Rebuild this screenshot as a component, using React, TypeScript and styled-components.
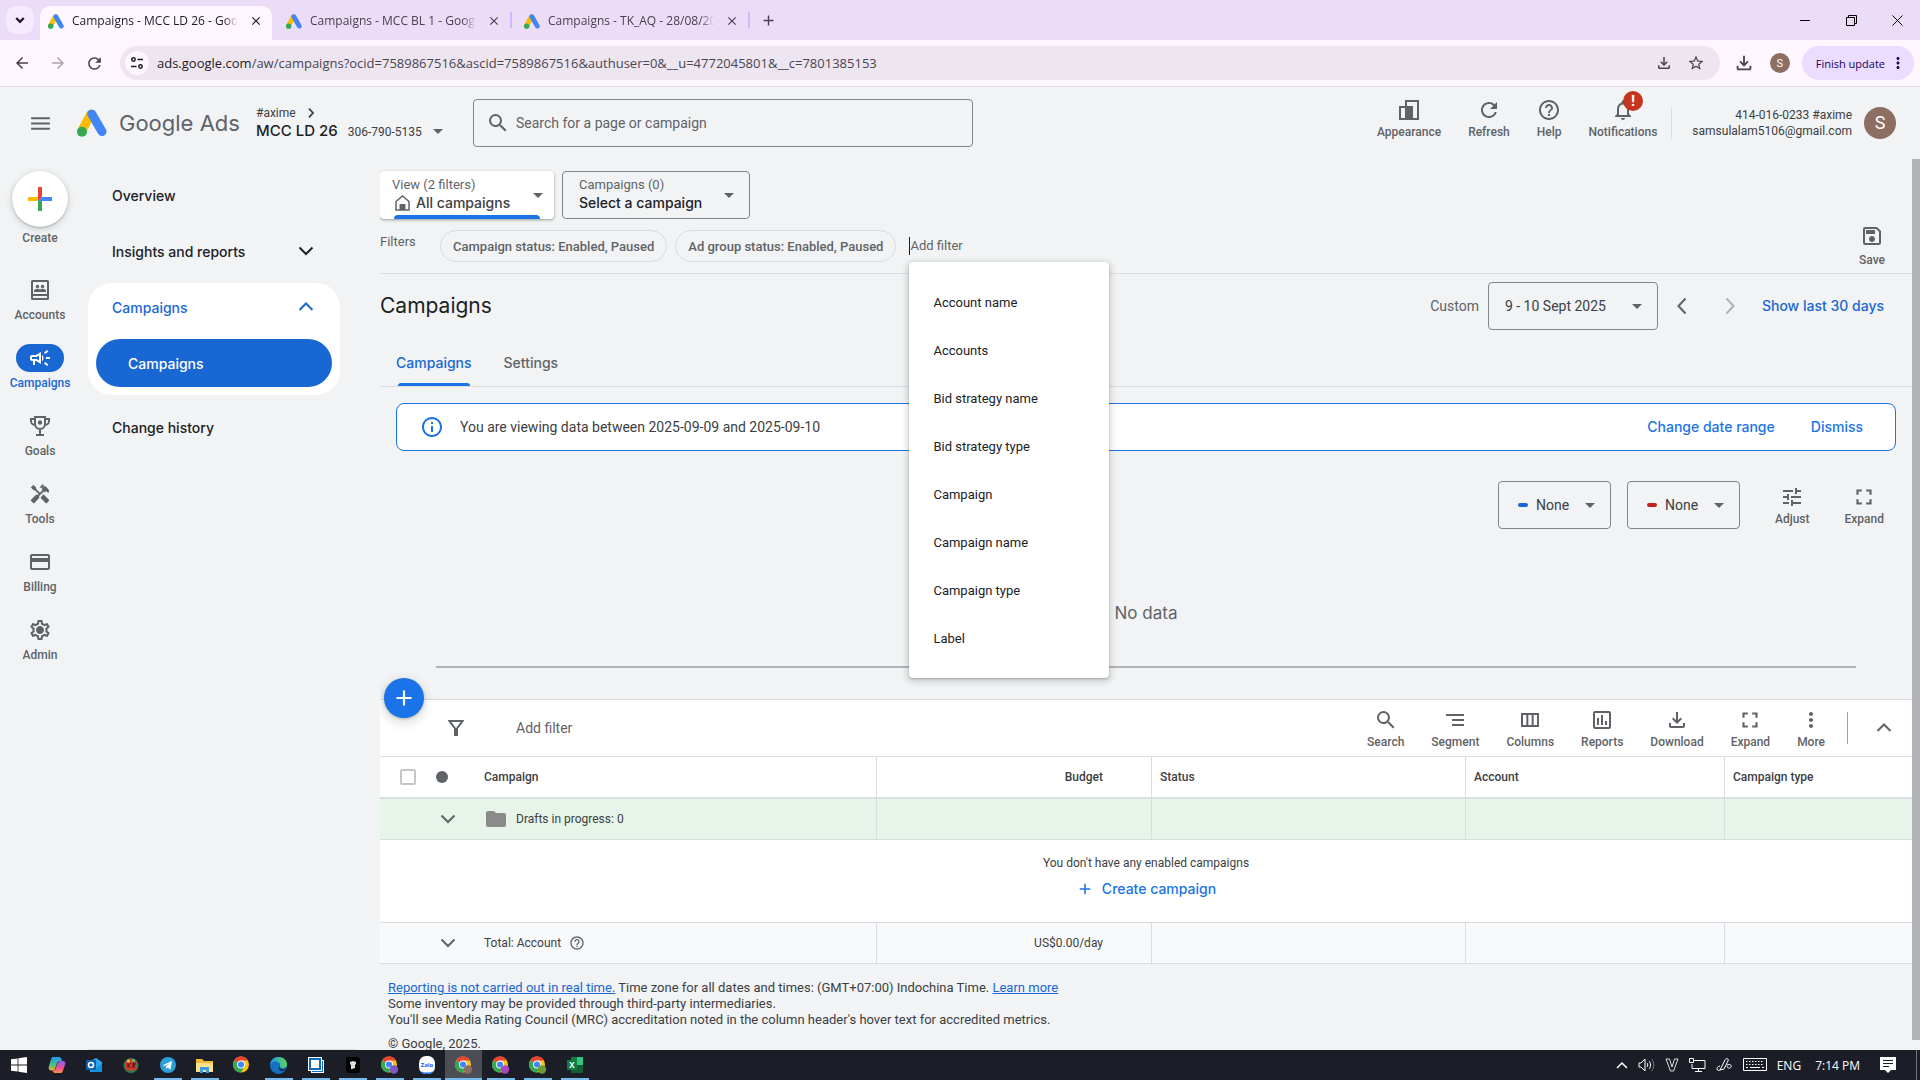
import React from "react";
import styled, { createGlobalStyle, css } from "styled-components";
import {
  MdMenu, MdSearch, MdRefresh, MdHelpOutline, MdNotificationsNone, MdArrowDropDown,
  MdOutlineCampaign, MdHandyman, MdOutlineCreditCard, MdOutlineSettings,
  MdOutlineSave, MdTune, MdFullscreen, MdInfoOutline, MdSegment, MdOutlineViewColumn,
  MdOutlineAssessment, MdOutlineFileDownload, MdMoreVert, MdFolder, MdAdd, MdArrowBack,
  MdArrowForward, MdStarBorder, MdClose,
} from "react-icons/md";

const ui = `Roboto, "Liberation Sans", sans-serif`;
const brand = `Inter, Roboto, sans-serif`;
const system = `"Open Sans", "Noto Sans", sans-serif`;

const Global = createGlobalStyle`
  *, *::before, *::after { box-sizing: border-box; }
  body { margin: 0; font-family: ${ui}; font-size: 12px; color: #3c4043; background: #f1f3f4; }
  button, input, select { font: inherit; color: inherit; background: none; border: 0; padding: 0; margin: 0; }
  button { cursor: pointer; }
  svg { display: block; flex: none; }
`;

/* ---------- shell ---------- */
const Screen = styled.div`
  display: flex; flex-direction: column; height: 100vh; overflow: hidden;
`;

/* ---------- browser ---------- */
const TabStrip = styled.div`
  display: flex; align-items: flex-end; height: 40px; flex: none; padding-left: 6px;
  background: #ebdcf7; font-family: ${system}; font-size: 12px; color: #4a4051;
`;
const TabSearch = styled.button`
  display: grid; place-items: center; width: 28px; height: 28px; margin: 0 6px 6px 0;
  border-radius: 10px; background: #f6ebfe; color: #1f1a24;
`;
const BrowserTab = styled.div<{ $active?: boolean }>`
  display: flex; align-items: center; gap: 8px; width: 232px; height: 34px; margin-right: 6px;
  padding: 0 6px 4px 8px; border-radius: 10px 10px 0 0;
  ${(p) => p.$active && css`background: #fef7ff; color: #1f1a24;`}
`;
const TabTitle = styled.span`
  flex: 1; overflow: hidden; white-space: nowrap; line-height: 20px;
  mask-image: linear-gradient(90deg, #000 92%, transparent);
`;
const TabClose = styled.button`display: grid; place-items: center; width: 20px; height: 20px;`;
const TabRule = styled.span<{ $hide?: boolean }>`
  width: 2px; height: 16px; margin: 0 0 12px -6px; background: #d5b8f8;
  visibility: ${(p) => (p.$hide ? "hidden" : "visible")};
`;
const TabSlot = styled.div`display: flex; align-items: flex-end; width: 238px; flex: none;`;
const NewTab = styled.button`display: grid; place-items: center; width: 28px; height: 28px; margin: 0 0 6px 0;`;
const WindowButtons = styled.div`display: flex; height: 40px; margin-left: auto; color: #000;`;
const WindowButton = styled.button`display: grid; place-items: center; width: 46px; height: 40px;`;

const Toolbar = styled.div`
  display: flex; align-items: center; height: 47px; flex: none; padding: 0 6px 0 4px;
  background: #fef7ff; border-bottom: 1px solid #e1dae9; font-family: ${system}; color: #4a4051;
`;
const NavButton = styled.button<{ $dim?: boolean }>`
  display: grid; place-items: center; width: 36px; height: 34px; opacity: ${(p) => (p.$dim ? 0.45 : 1)};
`;
const AddressBar = styled.div`
  display: flex; align-items: center; flex: 1; height: 34px; margin: 0 8px; padding: 0 8px 0 5px;
  border-radius: 17px; background: #ede5f0;
`;
const SiteInfo = styled.button`
  display: grid; place-items: center; width: 24px; height: 24px; margin-right: 8px; border-radius: 50%;
  background: #fef7ff; color: #1f1a24;
`;
const Address = styled.div`flex: 1; font-size: 13px; line-height: 20px; white-space: nowrap; color: #4a4550;
  b { font-weight: 400; color: #1f1a24; }
`;
const BarIcon = styled.button`display: grid; place-items: center; width: 32px; height: 32px;`;
const ToolbarEnd = styled.div`display: flex; align-items: center; gap: 4px;`;
const Avatar = styled.span<{ $size: number }>`
  display: grid; place-items: center; width: ${(p) => p.$size}px; height: ${(p) => p.$size}px; flex: none;
  border-radius: 50%; background: #8d6e63; color: #fff; font-family: ${ui};
  font-size: ${(p) => (p.$size > 24 ? 18 : 11)}px;
`;
const UpdateButton = styled.button`
  display: flex; align-items: center; gap: 4px; height: 34px; margin-left: 2px; padding: 0 7px 0 14px;
  border-radius: 17px; background: #eaddff; color: #22005d; font-size: 11px; white-space: nowrap;
`;

/* ---------- app header ---------- */
const Header = styled.header`
  display: flex; align-items: center; height: 72px; flex: none; padding: 0 24px 0 28px; background: #f1f3f4;
`;
const MenuButton = styled.button`display: grid; place-items: center; width: 24px; height: 24px; color: #5f6368;`;
const Logo = styled.a`
  display: flex; align-items: center; gap: 12px; width: 179px; margin-left: 25px; text-decoration: none;
  font-family: ${brand}; font-size: 22px; line-height: 28px; color: #5f6368; white-space: nowrap;
`;
const AccountPicker = styled.button`
  display: flex; flex-direction: column; width: 217px; text-align: left; color: #3c4043;
`;
const AccountParent = styled.span`display: flex; align-items: center; gap: 8px; height: 16px;`;
const AccountName = styled.span`display: flex; align-items: baseline; gap: 10px; height: 20px; line-height: 20px; white-space: nowrap;
  svg { align-self: center; margin-left: -6px; }
`;
const AccountStrong = styled.span`font-family: ${brand}; font-weight: 500; font-size: 15px; color: #202124;`;
const SearchBox = styled.label`
  display: flex; align-items: center; gap: 6px; width: 500px; height: 48px; padding: 0 12px;
  border: 1px solid #80868b; border-radius: 4px; color: #5f6368;
`;
const TextInput = styled.input`
  flex: 1; min-width: 0; outline: none; font-size: 14px; line-height: 20px;
  &::placeholder { color: #5f6368; opacity: 1; }
`;
const HeaderActions = styled.div`display: flex; align-items: center; gap: 24px; margin-left: auto;`;
const ActionGroup = styled.div`display: flex; gap: 27px; padding-bottom: 10px;`;
const IconAction = styled.button`
  display: flex; flex-direction: column; align-items: center; min-width: 24px; position: relative;
  font-weight: 500; font-size: 12px; line-height: 16px; color: #5f6368;
`;
const ActionIcon = styled.span<{ $h?: number }>`display: grid; place-items: center; height: ${(p) => p.$h ?? 28}px;`;
const AlertBadge = styled.span`
  position: absolute; top: -5px; left: 50%; display: grid; place-items: center; width: 20px; height: 20px;
  border-radius: 50%; background: #c5341f; color: #fff; font-weight: 700; font-size: 15px;
`;
const Identity = styled.div`
  display: flex; align-items: center; gap: 12px; margin-left: -10px; padding-left: 20px;
  border-left: 1px solid #dadce0; height: 32px; text-align: right; line-height: 16px;
`;

/* ---------- body ---------- */
const Body = styled.div`display: flex; flex: 1; min-height: 0; background: #f1f3f4;`;
const Rail = styled.nav`
  display: flex; flex-direction: column; align-items: center; gap: 21px; width: 80px; flex: none; padding-top: 12px;
`;
const RailItem = styled.a<{ $active?: boolean }>`
  display: flex; flex-direction: column; align-items: center; gap: 3px; text-decoration: none;
  font-weight: 500; font-size: 12px; line-height: 16px; color: ${(p) => (p.$active ? "#1967d2" : "#5f6368")};
`;
const CreateItem = styled.button`
  display: flex; flex-direction: column; align-items: center; gap: 3px; margin-bottom: 9px;
  font-weight: 500; line-height: 16px; color: #5f6368;
`;
const CreateCircle = styled.span`
  display: grid; place-items: center; width: 56px; height: 56px; border-radius: 50%; background: #fff;
  box-shadow: 0 1px 2px rgba(60,64,67,.3), 0 2px 6px 1px rgba(60,64,67,.15);
`;
const RailPill = styled.span<{ $active?: boolean }>`
  display: grid; place-items: center; width: 48px; height: 28px; border-radius: 14px;
  ${(p) => p.$active && css`background: #1967d2; color: #fff;`}
`;
const SubNav = styled.nav`
  width: 268px; flex: none; margin-left: 8px; padding: 8px 16px 0 0; border-bottom: 1px solid #dadce0;
  font-family: ${brand}; font-weight: 500; font-size: 14px; color: #202124;
`;
const navRow = css`
  display: flex; align-items: center; justify-content: space-between; width: 100%; padding: 0 22px 0 24px;
  color: inherit; text-decoration: none; font-weight: 500; text-align: left;
`;
const SubNavLink = styled.a`${navRow} height: 56px;`;
const SubNavToggle = styled.button<{ $h: number }>`${navRow} height: ${(p) => p.$h}px;`;
const SubNavCard = styled.div`margin: 4px 0; padding-bottom: 8px; border-radius: 24px; background: #fff; color: #1967d2;`;
const SubNavCurrent = styled.a`
  display: flex; align-items: center; height: 48px; margin: 8px 8px 0; padding-left: 32px;
  border-radius: 24px; background: #1967d2; color: #fff; text-decoration: none;
`;
const Main = styled.main`flex: 1; min-width: 0; margin-left: 24px; overflow: hidden;`;
const ScrollTrack = styled.div`width: 8px; flex: none; margin-bottom: 10px; background: #b1b2b5;`;

/* ---------- scope bar ---------- */
const ScopeBar = styled.section`
  display: flex; justify-content: space-between; align-items: flex-end; padding: 12px 27px 0 0;
  border-bottom: 1px solid #dadce0;
`;
const ScopeSelectors = styled.div`display: flex; gap: 8px;`;
const Caret = styled(MdArrowDropDown).attrs({ size: 24 })`color: #5f6368; pointer-events: none;`;
const ViewCard = styled.button`
  display: flex; justify-content: space-between; position: relative; width: 174px; height: 48px; padding: 6px 4px 0 12px;
  border-radius: 4px; background: #fff; text-align: left; color: #5f6368; font-size: 13px; line-height: 16px;
  box-shadow: 0 1px 2px rgba(60,64,67,.3), 0 1px 3px 1px rgba(60,64,67,.15);
  &::after { content: ""; position: absolute; left: 14px; right: 14px; bottom: 0; height: 4px; border-radius: 4px 4px 0 0; background: #1a73e8; }
  ${Caret} { margin-top: 6px; }
`;
const ViewName = styled.span`
  display: flex; align-items: center; gap: 6px; padding-left: 3px; height: 20px;
  font-family: ${brand}; font-weight: 500; font-size: 14px; color: #3c4043; white-space: nowrap;
`;
const SelectBox = styled.label<{ $w: number }>`
  display: flex; align-items: center; width: ${(p) => p.$w}px; height: 48px; padding: 0 8px 0 16px;
  border: 1px solid #80868b; border-radius: 4px; color: #5f6368; font-size: 13px; line-height: 16px;
`;
const SelectStack = styled.span`display: flex; flex-direction: column; flex: 1; min-width: 0;`;
const PlainSelect = styled.select<{ $brand?: boolean }>`
  appearance: none; outline: none; flex: 1; min-width: 0; height: 20px; font-size: 14px; line-height: 20px; color: #3c4043;
  ${(p) => p.$brand && css`font-family: ${brand}; font-weight: 500; color: #202124;`}
`;
const Filters = styled.div`display: flex; align-items: center; padding: 11px 0; color: #5f6368; font-size: 13px;`;
const FiltersLabel = styled.span`width: 60px; height: 24px; line-height: 16px;`;
const Chip = styled.button`
  height: 32px; margin-right: 8px; padding: 0 12px; border: 1px solid #dadce0; border-radius: 16px;
  font-weight: 500; white-space: nowrap;
`;
const AddFilter = styled.div`position: relative; display: flex; width: 200px; margin-left: 5px;
  input { font-size: 13px; border-left: 1px solid #202124; line-height: 18px; }
`;
const FilterMenu = styled.ul`
  position: absolute; z-index: 5; top: 25px; left: 0; width: 200px; margin: 0; padding: 16px 0; list-style: none;
  border-radius: 4px; background: #fff;
  box-shadow: 0 1px 2px rgba(60,64,67,.3), 0 2px 6px 2px rgba(60,64,67,.2);
`;
const FilterOption = styled.button`
  width: 100%; height: 48px; padding: 0 24px; text-align: left; font-size: 13px; color: #202124; display: block;
`;
const SaveAction = styled(IconAction)`margin-bottom: 5px;`;

/* ---------- title + tabs ---------- */
const TitleRow = styled.section`display: flex; align-items: center; padding: 8px 28px 8px 0;`;
const Title = styled.h1`
  flex: 1; margin: 0; font-family: ${brand}; font-weight: 400; font-size: 21px; line-height: 28px; color: #202124;
`;
const DateControls = styled.div`display: flex; align-items: center; font-size: 14px; color: #5f6368;
  > label { margin-left: 9px; }
`;
const StepButton = styled.button<{ $dim?: boolean }>`
  display: grid; place-items: center; width: 48px; height: 48px; opacity: ${(p) => (p.$dim ? 0.45 : 1)};
`;
const TextButton = styled.button<{ $light?: boolean }>`
  display: flex; align-items: center; gap: 8px; font-family: ${brand}; font-weight: 500; font-size: 14px; line-height: 20px;
  color: ${(p) => (p.$light ? "#1a73e8" : "#1967d2")}; white-space: nowrap;
`;
const RangeButton = styled(TextButton)`margin-left: 8px;`;
const Tabs = styled.div`display: flex; border-bottom: 1px solid #dadce0;`;
const PageTab = styled.button<{ $active?: boolean }>`
  position: relative; height: 48px; padding: 0 16px; font-family: ${brand}; font-weight: 500; font-size: 14px; color: #5f6368;
  ${(p) => p.$active && css`
    color: #1967d2;
    &::after { content: ""; position: absolute; left: 18px; right: 18px; bottom: 0; height: 3px; border-radius: 3px 3px 0 0; background: #1a73e8; }
  `}
`;
const Notice = styled.section`
  display: flex; align-items: center; height: 48px; margin: 16px 16px 0; padding: 0 32px 0 23px;
  border: 1px solid #1a73e8; border-radius: 8px; background: #fff; font-size: 14px; color: #3c4043;
  > svg { color: #1a73e8; } > p { flex: 1; margin: 0 0 0 16px; } > button + button { margin-left: 36px; }
`;

/* ---------- chart ---------- */
const ChartControls = styled.div`display: flex; justify-content: flex-end; align-items: center; gap: 16px; padding: 30px 28px 0 0;`;
const SeriesDash = styled.span<{ $color: string }>`width: 10px; height: 4px; margin: 0 8px 0 3px; border-radius: 2px; background: ${(p) => p.$color};`;
const ChartActions = styled.div`display: flex; gap: 35px; margin-left: 19px;`;
const EmptyChart = styled.div`
  height: 139px; margin: 0 56px 31px; padding-top: 72px; border-bottom: 2px solid #b1b3b6; text-align: center;
  font-family: ${brand}; font-size: 17px; line-height: 24px; color: #5f6368;
`;

/* ---------- table ---------- */
const Panel = styled.section`position: relative; border-top: 1px solid #dadce0; background: #fff;`;
const Fab = styled.button`
  position: absolute; top: -22px; left: 4px; display: grid; place-items: center; width: 40px; height: 40px;
  border-radius: 50%; background: #1a73e8; color: #fff;
  box-shadow: 0 1px 3px rgba(60,64,67,.3), 0 4px 8px 3px rgba(60,64,67,.12);
`;
const TableTools = styled.div`
  display: flex; align-items: center; height: 57px; padding: 0 16px 0 68px; border-bottom: 1px solid #dadce0; color: #5f6368;
  > input { margin-left: 52px; }
`;
const ToolList = styled.div`display: flex; gap: 27px; margin-right: 22px; padding-bottom: 1px;`;
const Collapse = styled.button`
  display: grid; place-items: center; height: 32px; padding-left: 24px; border-left: 1px solid #9aa0a6; color: #5f6368;
`;
const Grid = styled.table`
  width: 100%; table-layout: fixed; border-collapse: separate; border-spacing: 0; font-size: 12px; line-height: 16px; color: #3c4043;
`;
const Col = styled.col<{ $w?: number }>`width: ${(p) => (p.$w ? `${p.$w}px` : "auto")};`;
const cell = css<{ $right?: boolean }>`
  padding: 0 48px 0 8px; text-align: ${(p) => (p.$right ? "right" : "left")};
  border-right: 1px solid #dadce0; &:last-child { border-right: 0; }
`;
const Th = styled.th<{ $right?: boolean }>`${cell} height: 42px; font-weight: 500; border-bottom: 2px solid #dadce0;`;
const Td = styled.td<{ $right?: boolean }>`${cell} height: 41px; border-bottom: 1px solid #dadce0;`;
const DraftRow = styled.tr`background: #e6f4ea;`;
const TotalRow = styled.tr`background: #f8f9fb;`;
const Lead = styled.div<{ $pad: number; $gap: number }>`
  display: flex; align-items: center; gap: ${(p) => p.$gap}px; padding-left: ${(p) => p.$pad}px; white-space: nowrap;
`;
const Check = styled.input`
  appearance: none; width: 16px; height: 16px; border: 2px solid #c4c7c5; border-radius: 2px; background: #fff;
`;
const StatusDot = styled.span`width: 12px; height: 12px; margin: 0 20px 0 4px; border-radius: 50%; background: #5f6368;`;
const RowToggle = styled.button`display: grid; place-items: center; width: 24px; height: 24px; color: #5f6368;`;
const EmptyCell = styled.td`height: 83px; padding: 0; border-bottom: 1px solid #dadce0;`;
const EmptyState = styled.div`display: flex; flex-direction: column; align-items: center; gap: 8px; padding-bottom: 8px;`;

const Footer = styled.footer`padding: 16px 8px 0; font-size: 13px; line-height: 16px;
  p { margin: 0 0 8px; } a { color: #1967d2; text-decoration: underline; }
`;

/* ---------- taskbar ---------- */
const Taskbar = styled.div`
  display: flex; height: 30px; flex: none; background: #1b1d27; color: #fff; font-family: ${system}; font-size: 12px;
`;
const TaskIcon = styled.button<{ $open?: boolean; $current?: boolean }>`
  display: grid; place-items: center; width: 37px; height: 30px;
  background: ${(p) => (p.$current ? "#4c4d55" : "none")};
  position: relative;
  &:first-child { width: 38px; }
  ${(p) => (p.$open || p.$current) && css`
    &::after { content: ""; position: absolute; bottom: 0; height: 2px; width: ${p.$current ? 37 : 28}px; background: #76b9ed; }
  `}
`;
const Tray = styled.div`display: flex; align-items: center; margin-left: auto; gap: 10px; padding-right: 3px;
  span { white-space: nowrap; }
  span + span { margin-left: 4px; }
`;
const TrayNotes = styled.div`margin: 0 10px;`;
const TrayEdge = styled.div`width: 1px; height: 30px; background: #73757c;`;

/* ---------- drawings ---------- */
const AdsMark = ({ w }: { w: number }) => (
  <svg width={w} height={Math.round(w * 0.93)} viewBox="0 0 30 28" aria-hidden="true">
    <path d="M13.5 5.5 5 21.5" stroke="#fbbc04" strokeWidth="9" strokeLinecap="round" />
    <path d="M14.8 5 25 22.6" stroke="#4285f4" strokeWidth="9" strokeLinecap="round" />
    <circle cx="5" cy="22.8" r="5" fill="#34a853" />
  </svg>
);
const Chevron = ({ dir, size = 24, stroke = 2 }: { dir: "up" | "down" | "left" | "right"; size?: number; stroke?: number }) => {
  const d = { down: "M5.5 8.500 12 15 18.500 8.500", up: "M5.5 15 12 8.500l6.500 6.500", left: "M15.500 4.500 8.500 12l7 7.500", right: "M8.500 4.500 15.500 12l-7 7.500" }[dir];
  return <svg width={size} height={size} viewBox="0 0 24 24" fill="none" stroke="currentColor" strokeWidth={stroke} aria-hidden="true"><path d={d} /></svg>;
};
const CreatePlus = () => (
  <svg width="24" height="24" viewBox="0 0 24 24" aria-hidden="true">
    <path fill="#ea4335" d="M10 0h4v10l-4 4z" /><path fill="#fbbc04" d="M0 10h10v4H0z" />
    <path fill="#34a853" d="M10 14l4-4v14h-4z" /><path fill="#4285f4" d="M14 10h10v4H10z" />
  </svg>
);
const AccountsIcon = () => (
  <svg width="24" height="24" viewBox="0 0 24 24" fill="currentColor" aria-hidden="true">
    <path fillRule="evenodd" d="M4.500 2h15A1.500 1.500 0 0 1 21 3.500v17a1.500 1.500 0 0 1-1.500 1.500h-15A1.500 1.500 0 0 1 3 20.500v-17A1.500 1.500 0 0 1 4.500 2zM5 4v12h14V4zm0 14v2h14v-2z" />
    <circle cx="9.500" cy="8.500" r="1.700" /><circle cx="14.500" cy="8.500" r="1.700" />
    <path d="M6 14v-1c0-1.500 1.800-2.200 3.300-2.200 1.200 0 2 .3 2.700.8.700-.5 1.500-.8 2.700-.8 1.500 0 3.300.7 3.300 2.200v1z" />
  </svg>
);
const TrophyIcon = () => (
  <svg width="24" height="24" viewBox="0 0 24 24" fill="none" stroke="currentColor" strokeWidth="2" aria-hidden="true">
    <path d="M7 3h10v7a5 5 0 0 1-10 0zM7 5H3v2a4 4 0 0 0 4 4M17 5h4v2a4 4 0 0 1-4 4M12 15v6M8 21h8" /><circle cx="12" cy="8.500" r="1.200" fill="currentColor" />
  </svg>
);
const GearIcon = () => (
  <svg width="24" height="24" viewBox="0 0 24 24" aria-hidden="true">
    <MdOutlineSettings size={24} /><circle cx="12" cy="12" r="3" fill="currentColor" />
  </svg>
);
const AppearanceIcon = () => (
  <svg width="22" height="22" viewBox="0 0 22 22" fill="none" stroke="currentColor" strokeWidth="2" aria-hidden="true">
    <path d="M8 7V2h12v18h-5M2 8h6v12H2z" /><path d="M8 7h7v14H8z" fill="currentColor" stroke="none" />
  </svg>
);
const HouseIcon = () => (
  <svg width="15" height="16" viewBox="0 0 15 16" aria-hidden="true">
    <path d="M1 15V6.500L7.500 1 14 6.500V15z" fill="none" stroke="#5f6368" strokeWidth="1.500" /><path d="M4.500 9h6v6h-6z" fill="#5f6368" />
  </svg>
);
const FunnelIcon = () => (
  <svg width="16" height="18" viewBox="0 0 16 18" fill="none" stroke="currentColor" strokeWidth="2" aria-hidden="true">
    <path d="M1.500 2h13L9 9.500V16H7V9.500z" />
  </svg>
);
const ChromeMark = ({ badge }: { badge?: string }) => (
  <svg width="18" height="18" viewBox="0 0 18 18" aria-hidden="true">
    <circle cx="8" cy="8.500" r="8" fill="#fbc116" />
    <path d="M8 8.500 1.070 4.500A8 8 0 0 1 14.930 4.500H8z" fill="#ea4335" />
    <path d="M8 8.500 1.070 4.500A8 8 0 0 0 8 16.500l3.500-6z" fill="#34a853" />
    <circle cx="8" cy="8.500" r="4" fill="#fff" /><circle cx="8" cy="8.500" r="3.100" fill="#4285f4" />
    {badge && <circle cx="13" cy="13.500" r="4.200" fill={badge} />}
  </svg>
);
const OfficeMark = ({ letter, dark, mid, light }: { letter: string; dark: string; mid: string; light: string }) => (
  <svg width="16" height="16" viewBox="0 0 16 16" aria-hidden="true">
    <rect x="4" width="6" height="8" fill={mid} /><rect x="10" width="6" height="8" fill={light} /><rect x="4" y="8" width="12" height="8" fill={dark} />
    <rect y="3" width="10" height="10" rx="1" fill={mid} />
    <text x="5" y="11" fontSize="8" fontWeight="700" fill="#fff" textAnchor="middle" fontFamily="Open Sans">{letter}</text>
  </svg>
);
const taskIcons: { name: string; open?: boolean; current?: boolean; art: React.ReactNode }[] = [
  { name: "Start", art: <svg width="16" height="16" viewBox="0 0 16 16" fill="#fff"><path d="M0 2.300 6.600 1.400v6.200H0zM7.400 1.300 16 0v7.600H7.400zM0 8.400h6.600v6.200L0 13.700zM7.400 8.400H16V16l-8.600-1.300z" /></svg> },
  { name: "Copilot", art: (
    <svg width="18" height="16" viewBox="0 0 18 16">
      <defs>
        <linearGradient id="cpA" x1="0" y1="0" x2="0" y2="1"><stop stopColor="#1f9bf0" /><stop offset=".6" stopColor="#4cc27a" /><stop offset="1" stopColor="#f0b429" /></linearGradient>
        <linearGradient id="cpB" x1="0" y1="0" x2="0" y2="1"><stop stopColor="#8b5cf6" /><stop offset=".6" stopColor="#f0508c" /><stop offset="1" stopColor="#fb923c" /></linearGradient>
      </defs>
      <path d="M5 0h6c1.500 0 2 1 2.500 2.500L14 4h-2.500c-1.500 0-2 1-2.500 2.500l-2 5C6.500 13 5.500 13.500 4 13.500 1 13.500 0 12 1 9l2-6.500C3.500 1 4 0 5 0z" fill="url(#cpA)" />
      <path d="M13 16H7c-1.500 0-2-1-2.500-2.500 1.500 0 2.500-.5 3-2l2-5C10 5 10.500 4 12 4h2.500C17 4 18 5 17 8l-2 5.500c-.5 1.500-1 2.500-2 2.500z" fill="url(#cpB)" />
    </svg>) },
  { name: "Outlook", art: <svg width="16" height="16" viewBox="0 0 16 16"><path d="M4 4l6-3 6 4v10H4z" fill="#28a8ea" /><path d="M4 15l12-8v8z" fill="#1490df" /><rect y="3" width="10" height="10" rx="1" fill="#0f5fb5" /><circle cx="5" cy="8" r="2.500" fill="none" stroke="#fff" strokeWidth="1.500" /></svg> },
  { name: "Game", art: <svg width="16" height="16" viewBox="0 0 16 16"><circle cx="8" cy="8.500" r="7.500" fill="#2f7d4f" /><path d="M2 4l3 1 3-4 3 4 3-1-1 4 1 4-3 1-3 1-3-1-3-1 1-4z" fill="#d8372a" /><circle cx="5.500" cy="4" r="1.500" fill="#f5c04a" /><circle cx="10.500" cy="3.500" r="1.500" fill="#6fc27c" /><path d="M5 6v5M5 9l3-3M5 8l3 3M10 6v5M10 6h2v2h-2l2 3" stroke="#4a1512" fill="none" /></svg> },
  { name: "Telegram", open: true, art: <svg width="16" height="16" viewBox="0 0 16 16"><circle cx="8" cy="8" r="8" fill="#2a9fd8" /><path d="M3 8l9-4-1.500 8.500-3-2L6 12V9.500L10 6 5 9z" fill="#fff" /></svg> },
  { name: "File Explorer", open: true, art: <svg width="17" height="15" viewBox="0 0 17 15"><path d="M0 1h6l2 2h9v11H0z" fill="#f5b932" /><path d="M0 5h17v9H0z" fill="#fde08a" /><path d="M4 15V9h9v6h-3v-3H7v3z" fill="#3f9be0" /></svg> },
  { name: "Chrome", art: <ChromeMark /> },
  { name: "Edge", open: true, art: (
    <svg width="17" height="17" viewBox="0 0 17 17">
      <defs><linearGradient id="edg" x1="0" x2="1"><stop stopColor="#1b9de2" /><stop offset="1" stopColor="#5fd35c" /></linearGradient></defs>
      <circle cx="8.500" cy="8.500" r="8.500" fill="#1570c4" /><path d="M0 8C.5 3 4 0 8.500 0 13.500 0 17 3.500 17 7c0 3-2.500 4-4.500 4s-3-1-2.500-2C11 6 8 4.500 5.500 4.500S1 6 0 8z" fill="url(#edg)" /><path d="M9.500 9c-.5 2.500 2 4 4.500 3.500l2-1c.5 0-.5 1.500-1.500 2-3.500 1.500-7-1-5-4.500z" fill="#1b1d27" />
    </svg>) },
  { name: "Remote Desktop", open: true, art: <svg width="16" height="16" viewBox="0 0 16 16"><rect x="3.500" y="3.500" width="12" height="12" fill="#0f6cbd" stroke="#fff" /><rect width="14" height="14" fill="#fff" /><rect x="2" y="2" width="10" height="10" fill="#fff" stroke="#0f6cbd" strokeWidth="2" /></svg> },
  { name: "Cap", open: true, art: <svg width="14" height="16" viewBox="0 0 14 16"><rect width="14" height="16" rx="3" fill="#000" /><path d="M4 5l3-1 3 1v2L9 8v3l-3 1H5V8L4 7z" fill="#ddd" /></svg> },
  { name: "Chrome profile M", open: true, art: <ChromeMark badge="#7e57c2" /> },
  { name: "Zalo", open: true, art: <svg width="16" height="18" viewBox="0 0 16 18"><rect width="16" height="18" rx="7" fill="#fff" /><path d="M2 15c3 2 9 2 12 0-1 2-3 3-6 3s-5-1-6-3z" fill="#0068ff" /><text x="8" y="11" fontSize="6" fontWeight="700" fill="#0068ff" textAnchor="middle" fontFamily="Open Sans">Zalo</text></svg> },
  { name: "Chrome profile S", current: true, art: <ChromeMark badge="#8d6e63" /> },
  { name: "Chrome profile H", open: true, art: <ChromeMark badge="#ab47bc" /> },
  { name: "Chrome profile W", open: true, art: <ChromeMark badge="#689f38" /> },
  { name: "Excel", open: true, art: <OfficeMark letter="X" dark="#185c37" mid="#107c41" light="#33c481" /> },
];

const browserTabs = ["Campaigns - MCC LD 26 - Google Ads", "Campaigns - MCC BL 1 - Google Ads", "Campaigns - TK_AQ - 28/08/2025"];
const filterOptions = ["Account name", "Accounts", "Bid strategy name", "Bid strategy type", "Campaign", "Campaign name", "Campaign type", "Label"];
const railItems = [
  { name: "Accounts", icon: <AccountsIcon /> },
  { name: "Campaigns", icon: <MdOutlineCampaign size={24} />, active: true },
  { name: "Goals", icon: <TrophyIcon /> },
  { name: "Tools", icon: <MdHandyman size={22} /> },
  { name: "Billing", icon: <MdOutlineCreditCard size={24} /> },
  { name: "Admin", icon: <GearIcon /> },
];
const tableTools = [
  { name: "Search", icon: <MdSearch size={24} /> },
  { name: "Segment", icon: <MdSegment size={24} /> },
  { name: "Columns", icon: <MdOutlineViewColumn size={24} /> },
  { name: "Reports", icon: <MdOutlineAssessment size={24} /> },
  { name: "Download", icon: <MdOutlineFileDownload size={24} /> },
  { name: "Expand", icon: <MdFullscreen size={26} /> },
  { name: "More", icon: <MdMoreVert size={24} /> },
];

function Browser() {
  return (
    <>
      <TabStrip>
        <TabSearch aria-label="Search tabs"><Chevron dir="down" size={14} stroke={4} /></TabSearch>
        {browserTabs.map((t, i) => (
          <TabSlot key={t}>
            <BrowserTab $active={i === 0}>
              <AdsMark w={16} /><TabTitle>{t}</TabTitle>
              <TabClose aria-label="Close tab"><MdClose size={14} /></TabClose>
            </BrowserTab>
            <TabRule $hide={i === 0} />
          </TabSlot>
        ))}
        <NewTab aria-label="New tab"><MdAdd size={17} /></NewTab>
        <WindowButtons>
          <WindowButton aria-label="Minimise"><svg width="10" height="11"><path d="M0 5.500h10" stroke="currentColor" /></svg></WindowButton>
          <WindowButton aria-label="Restore"><svg width="11" height="11" fill="none" stroke="currentColor"><path d="M.5 2.500h8v8h-8zM2.500 2.500v-2h8v8h-2" /></svg></WindowButton>
          <WindowButton aria-label="Close"><svg width="11" height="11"><path d="M.5.5l10 10M10.500.5l-10 10" stroke="currentColor" /></svg></WindowButton>
        </WindowButtons>
      </TabStrip>
      <Toolbar>
        <NavButton aria-label="Back"><MdArrowBack size={18} /></NavButton>
        <NavButton $dim aria-label="Forward"><MdArrowForward size={18} /></NavButton>
        <NavButton aria-label="Reload"><MdRefresh size={19} /></NavButton>
        <AddressBar>
          <SiteInfo aria-label="Site information">
            <svg width="14" height="14" viewBox="0 0 14 14" fill="none" stroke="currentColor" strokeWidth="1.500"><circle cx="3.500" cy="3.500" r="1.700" /><path d="M7.500 3.500H13M1 10.500h5.500" /><circle cx="10.500" cy="10.500" r="1.700" /></svg>
          </SiteInfo>
          <Address><b>ads.google.com</b>/aw/campaigns?ocid=7589867516&amp;ascid=7589867516&amp;authuser=0&amp;__u=4772045801&amp;__c=7801385153</Address>
          <BarIcon aria-label="Install"><MdOutlineFileDownload size={18} /></BarIcon>
          <BarIcon aria-label="Bookmark"><MdStarBorder size={18} /></BarIcon>
        </AddressBar>
        <ToolbarEnd>
          <BarIcon aria-label="Downloads"><MdOutlineFileDownload size={22} /></BarIcon>
          <BarIcon aria-label="Profile"><Avatar $size={20}>S</Avatar></BarIcon>
          <UpdateButton>Finish update <MdMoreVert size={18} /></UpdateButton>
        </ToolbarEnd>
      </Toolbar>
    </>
  );
}

function AppHeader() {
  return (
    <Header>
      <MenuButton aria-label="Menu"><MdMenu size={25} /></MenuButton>
      <Logo href="#"><AdsMark w={30} />Google Ads</Logo>
      <AccountPicker>
        <AccountParent>#axime <Chevron dir="right" size={14} stroke={3} /></AccountParent>
        <AccountName><AccountStrong>MCC LD 26</AccountStrong>306-790-5135 <Caret /></AccountName>
      </AccountPicker>
      <SearchBox><MdSearch size={24} /><TextInput placeholder="Search for a page or campaign" aria-label="Search" /></SearchBox>
      <HeaderActions>
        <ActionGroup>
          <IconAction><ActionIcon><AppearanceIcon /></ActionIcon>Appearance</IconAction>
          <IconAction><ActionIcon><MdRefresh size={24} /></ActionIcon>Refresh</IconAction>
          <IconAction><ActionIcon><MdHelpOutline size={24} /></ActionIcon>Help</IconAction>
          <IconAction><ActionIcon><MdNotificationsNone size={24} /></ActionIcon>Notifications<AlertBadge>!</AlertBadge></IconAction>
        </ActionGroup>
        <Identity><div>414-016-0233 #axime<br />samsulalam5106@gmail.com</div><Avatar $size={32}>S</Avatar></Identity>
      </HeaderActions>
    </Header>
  );
}

function CampaignTable() {
  return (
    <Grid>
      <colgroup><Col $w={497} /><Col $w={275} /><Col $w={314} /><Col $w={259} /><Col /></colgroup>
      <thead>
        <tr>
          <Th><Lead $pad={12} $gap={16}><Check type="checkbox" aria-label="Select all" /><StatusDot />Campaign</Lead></Th>
          <Th $right>Budget</Th><Th>Status</Th><Th>Account</Th><Th>Campaign type</Th>
        </tr>
      </thead>
      <tbody>
        <DraftRow>
          <Td><Lead $pad={48} $gap={8}><RowToggle aria-label="Expand drafts"><Chevron dir="down" /></RowToggle><Lead $pad={16} $gap={8}><MdFolder size={24} color="#8a8a8a" />Drafts in progress: 0</Lead></Lead></Td>
          <Td /><Td /><Td /><Td />
        </DraftRow>
        <tr>
          <EmptyCell colSpan={5}>
            <EmptyState>You don't have any enabled campaigns<TextButton $light><MdAdd size={18} />Create campaign</TextButton></EmptyState>
          </EmptyCell>
        </tr>
        <TotalRow>
          <Td><Lead $pad={48} $gap={8}><RowToggle aria-label="Expand totals"><Chevron dir="down" /></RowToggle><Lead $pad={16} $gap={8}>Total: Account <MdHelpOutline size={16} color="#5f6368" /></Lead></Lead></Td>
          <Td $right>US$0.00/day</Td><Td /><Td /><Td />
        </TotalRow>
      </tbody>
    </Grid>
  );
}

export default function App() {
  return (
    <Screen>
      <Global />
      <Browser />
      <AppHeader />
      <Body>
        <Rail>
          <CreateItem><CreateCircle><CreatePlus /></CreateCircle>Create</CreateItem>
          {railItems.map((r) => (
            <RailItem key={r.name} href="#" $active={r.active}><RailPill $active={r.active}>{r.icon}</RailPill>{r.name}</RailItem>
          ))}
        </Rail>
        <SubNav>
          <SubNavLink href="#">Overview</SubNavLink>
          <SubNavToggle $h={56}>Insights and reports<Chevron dir="down" /></SubNavToggle>
          <SubNavCard>
            <SubNavToggle $h={48}>Campaigns<Chevron dir="up" /></SubNavToggle>
            <SubNavCurrent href="#">Campaigns</SubNavCurrent>
          </SubNavCard>
          <SubNavLink href="#">Change history</SubNavLink>
        </SubNav>
        <Main>
          <ScopeBar>
            <div>
              <ScopeSelectors>
                <ViewCard><span>View (2 filters)<ViewName><HouseIcon />All campaigns</ViewName></span><Caret /></ViewCard>
                <SelectBox $w={188}>
                  <SelectStack>Campaigns (0)<PlainSelect $brand><option>Select a campaign</option></PlainSelect></SelectStack><Caret />
                </SelectBox>
              </ScopeSelectors>
              <Filters>
                <FiltersLabel>Filters</FiltersLabel>
                <Chip>Campaign status: Enabled, Paused</Chip>
                <Chip>Ad group status: Enabled, Paused</Chip>
                <AddFilter>
                  <TextInput placeholder="Add filter" aria-label="Add filter" />
                  <FilterMenu>{filterOptions.map((o) => <li key={o}><FilterOption>{o}</FilterOption></li>)}</FilterMenu>
                </AddFilter>
              </Filters>
            </div>
            <SaveAction><ActionIcon $h={32}><MdOutlineSave size={24} /></ActionIcon>Save</SaveAction>
          </ScopeBar>
          <TitleRow>
            <Title>Campaigns</Title>
            <DateControls>
              Custom
              <SelectBox $w={170}><PlainSelect aria-label="Date range"><option>9 - 10 Sept 2025</option></PlainSelect><Caret /></SelectBox>
              <StepButton aria-label="Previous"><Chevron dir="left" /></StepButton>
              <StepButton $dim aria-label="Next"><Chevron dir="right" /></StepButton>
              <RangeButton>Show last 30 days</RangeButton>
            </DateControls>
          </TitleRow>
          <Tabs><PageTab $active>Campaigns</PageTab><PageTab>Settings</PageTab></Tabs>
          <Notice>
            <MdInfoOutline size={24} /><p>You are viewing data between 2025-09-09 and 2025-09-10</p>
            <TextButton $light>Change date range</TextButton><TextButton $light>Dismiss</TextButton>
          </Notice>
          <ChartControls>
            {["#1967d2", "#c5221f"].map((c) => (
              <SelectBox key={c} $w={113}><SeriesDash $color={c} /><PlainSelect aria-label="Metric"><option>None</option></PlainSelect><Caret /></SelectBox>
            ))}
            <ChartActions>
              <IconAction><ActionIcon><MdTune size={24} /></ActionIcon>Adjust</IconAction>
              <IconAction><ActionIcon><MdFullscreen size={26} /></ActionIcon>Expand</IconAction>
            </ChartActions>
          </ChartControls>
          <EmptyChart>No data</EmptyChart>
          <Panel>
            <Fab aria-label="New campaign"><MdAdd size={26} /></Fab>
            <TableTools>
              <FunnelIcon /><TextInput placeholder="Add filter" aria-label="Table filter" />
              <ToolList>{tableTools.map((t) => <IconAction key={t.name}><ActionIcon>{t.icon}</ActionIcon>{t.name}</IconAction>)}</ToolList>
              <Collapse aria-label="Collapse"><Chevron dir="up" size={24} /></Collapse>
            </TableTools>
            <CampaignTable />
          </Panel>
          <Footer>
            <p><a href="#">Reporting is not carried out in real time.</a> Time zone for all dates and times: (GMT+07:00) Indochina Time. <a href="#">Learn more</a><br />
              Some inventory may be provided through third-party intermediaries.<br />
              You'll see Media Rating Council (MRC) accreditation noted in the column header's hover text for accredited metrics.</p>
            <p>© Google, 2025.</p>
          </Footer>
        </Main>
        <ScrollTrack />
      </Body>
      <Taskbar>
        {taskIcons.map((t) => <TaskIcon key={t.name} aria-label={t.name} $open={t.open} $current={t.current}>{t.art}</TaskIcon>)}
        <Tray>
          <svg width="12" height="8" fill="none" stroke="#fff" strokeWidth="1.500"><path d="M1 7l5-5 5 5" /></svg>
          <svg width="17" height="14" fill="none" stroke="#fff"><path d="M1 5h2l4-4v12L3 9H1zM9 5c1 1 1 3 0 4M11 3c2 2 2 6 0 8" /><path d="M13.500 1c3 3 3 9 0 12" stroke="#777" /></svg>
          <svg width="14" height="14" fill="none" stroke="#ddd"><path d="M1 1h3.500L7 9l2.500-8H13L8.500 13h-3z" /></svg>
          <svg width="17" height="14" fill="none" stroke="#fff"><path d="M5 2.500h11v8H3V6M9.500 10.500v3M6 13.500h7M.5.5h4v4h-4z" /></svg>
          <svg width="17" height="16" fill="none" stroke="#fff"><path d="M4 13L9 3c1-2 4-2 3 1L8 12l-4 1zM4 13c-4 2-4-4 0-4M11 8c3-1 5 0 4 2s-4 1-4-1" /></svg>
          <svg width="24" height="14" fill="none" stroke="#fff"><path d="M.5.5h23v12H.5z" /><path d="M3 3.500h18M3 6.500h18" strokeDasharray="1.500 1.500" /><path d="M3 9.500h2M7 9.500h10M19 9.500h2" /></svg>
          <span>ENG</span><span>7:14 PM</span>
          <TrayNotes><svg width="16" height="16"><path d="M0 0h16v13h-5l-3 3-3-3H0z" fill="#fff" /><path d="M3 3.500h10M3 6.500h10M3 9.500h6" stroke="#1b1d27" /></svg></TrayNotes>
          <TrayEdge />
        </Tray>
      </Taskbar>
    </Screen>
  );
}
